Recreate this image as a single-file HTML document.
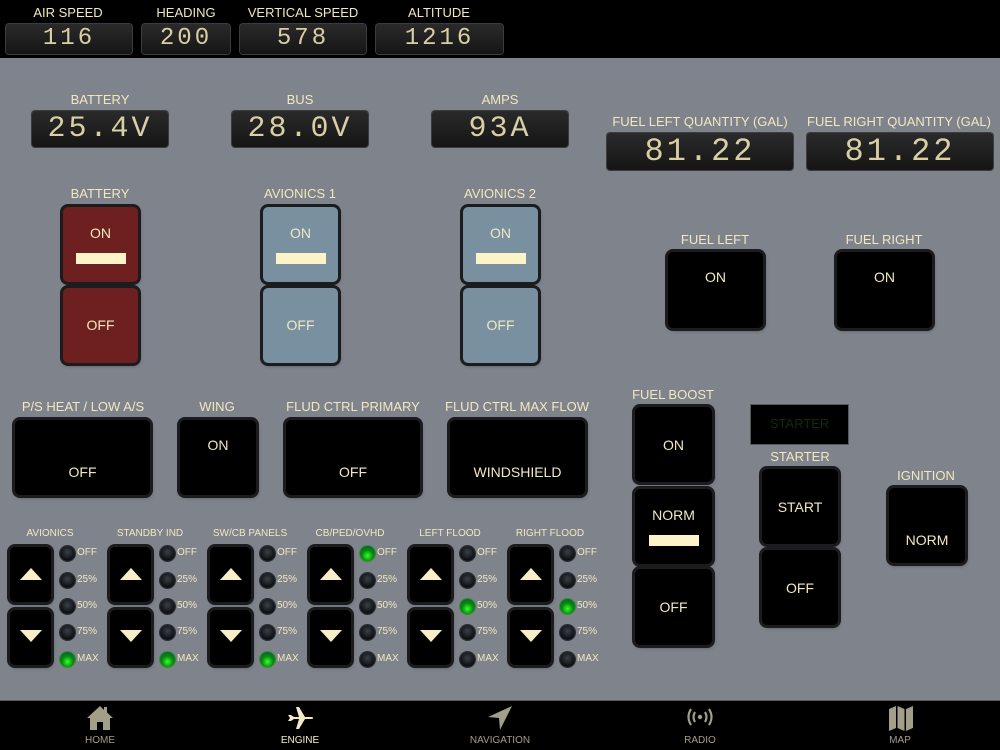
<!DOCTYPE html>
<html><head><meta charset="utf-8"><style>
*{margin:0;padding:0;box-sizing:border-box}
body{width:1000px;height:750px;overflow:hidden;background:#7e838c;font-family:"Liberation Sans",sans-serif;color:#f2e8bf;position:relative}
.a{position:absolute}
.top{left:0;top:0;width:1000px;height:58px;background:#000}
.bot{left:0;top:700px;width:1000px;height:50px;background:#000;border-top:1px solid #55585e}
.lbl{position:absolute;font-size:13px;text-align:center;white-space:nowrap;transform:translateX(-50%)}
.disp{position:absolute;background:linear-gradient(#2a2a2a,#151515);border-radius:3px;box-shadow:0 0 0 1px #3a3c40;color:#d9cfa5;font-family:"Liberation Mono",monospace;text-align:center;letter-spacing:3px}
.btn{position:absolute;background:#000;border-radius:5px;box-shadow:0 0 0 3px #1c1c1e,1px 2px 4px rgba(0,0,0,.5);font-size:14px;text-align:center}
.btn span{position:absolute;left:0;right:0}
.red{background:#6d201f}
.blue{background:#7890a0}
.bar{position:absolute;left:50%;width:50px;height:11px;margin-left:-25px;background:#fdf3c8}
.led{position:absolute;width:15px;height:15px;border-radius:50%;background:radial-gradient(circle at 50% 40%,#3a4048,#0b0d10 70%);box-shadow:0 0 0 1px #2a2d33}
.led.g{background:radial-gradient(circle at 50% 65%,#3f3 ,#0a8a0a 45%,#063 80%);box-shadow:0 0 0 1px #3a8a3a}
.lt{position:absolute;font-size:10px}
.tri-u{position:absolute;left:50%;margin-left:-11px;width:0;height:0;border-left:11px solid transparent;border-right:11px solid transparent;border-bottom:12px solid #f8efc8}
.tri-d{position:absolute;left:50%;margin-left:-11px;width:0;height:0;border-left:11px solid transparent;border-right:11px solid transparent;border-top:12px solid #f8efc8}
.tab{position:absolute;top:735px;font-size:10px;color:#a39e88;transform:translateX(-50%)}
</style></head><body>
<div class="a top"></div>
<div class="lbl" style="left:68px;top:5px">AIR SPEED</div>
<div class="lbl" style="left:186px;top:5px">HEADING</div>
<div class="lbl" style="left:303px;top:5px">VERTICAL SPEED</div>
<div class="lbl" style="left:439px;top:5px">ALTITUDE</div>
<div class="disp" style="left:6px;top:24px;width:126px;height:30px;font-size:24px;line-height:30px">116</div>
<div class="disp" style="left:142px;top:24px;width:88px;height:30px;font-size:24px;line-height:30px">200</div>
<div class="disp" style="left:240px;top:24px;width:126px;height:30px;font-size:24px;line-height:30px">578</div>
<div class="disp" style="left:376px;top:24px;width:127px;height:30px;font-size:24px;line-height:30px">1216</div>

<div class="lbl" style="left:100px;top:92px">BATTERY</div>
<div class="lbl" style="left:300px;top:92px">BUS</div>
<div class="lbl" style="left:500px;top:92px">AMPS</div>
<div class="disp" style="left:32px;top:111px;width:136px;height:36px;font-size:30px;line-height:36px">25.4V</div>
<div class="disp" style="left:232px;top:111px;width:136px;height:36px;font-size:30px;line-height:36px">28.0V</div>
<div class="disp" style="left:432px;top:111px;width:136px;height:36px;font-size:30px;line-height:36px">93A</div>
<div class="lbl" style="left:700px;top:114px">FUEL LEFT QUANTITY (GAL)</div>
<div class="lbl" style="left:899px;top:114px">FUEL RIGHT QUANTITY (GAL)</div>
<div class="disp" style="left:607px;top:133px;width:186px;height:37px;font-size:32px;line-height:37px">81.22</div>
<div class="disp" style="left:807px;top:133px;width:186px;height:37px;font-size:32px;line-height:37px">81.22</div>

<div class="lbl" style="left:100px;top:186px">BATTERY</div>
<div class="lbl" style="left:300px;top:186px">AVIONICS 1</div>
<div class="lbl" style="left:500px;top:186px">AVIONICS 2</div>
<div class="btn red" style="left:63px;top:207px;width:75px;height:75px"><span style="top:18px">ON</span><div class="bar" style="top:46px"></div></div>
<div class="btn red" style="left:63px;top:288px;width:75px;height:75px"><span style="top:29px">OFF</span></div>
<div class="btn blue" style="left:263px;top:207px;width:75px;height:75px"><span style="top:18px">ON</span><div class="bar" style="top:46px"></div></div>
<div class="btn blue" style="left:263px;top:288px;width:75px;height:75px"><span style="top:29px">OFF</span></div>
<div class="btn blue" style="left:463px;top:207px;width:75px;height:75px"><span style="top:18px">ON</span><div class="bar" style="top:46px"></div></div>
<div class="btn blue" style="left:463px;top:288px;width:75px;height:75px"><span style="top:29px">OFF</span></div>

<div class="lbl" style="left:715px;top:232px">FUEL LEFT</div>
<div class="lbl" style="left:884px;top:232px">FUEL RIGHT</div>
<div class="btn" style="left:668px;top:252px;width:95px;height:76px"><span style="top:17px">ON</span></div>
<div class="btn" style="left:837px;top:252px;width:95px;height:76px"><span style="top:17px">ON</span></div>

<div class="lbl" style="left:83px;top:399px">P/S HEAT / LOW A/S</div>
<div class="lbl" style="left:217px;top:399px">WING</div>
<div class="lbl" style="left:353px;top:399px">FLUD CTRL PRIMARY</div>
<div class="lbl" style="left:517px;top:399px">FLUD CTRL MAX FLOW</div>
<div class="btn" style="left:15px;top:420px;width:135px;height:75px"><span style="top:44px">OFF</span></div>
<div class="btn" style="left:180px;top:420px;width:76px;height:75px"><span style="top:17px">ON</span></div>
<div class="btn" style="left:286px;top:420px;width:134px;height:75px"><span style="top:44px">OFF</span></div>
<div class="btn" style="left:450px;top:420px;width:135px;height:75px"><span style="top:44px">WINDSHIELD</span></div>

<div class="lbl" style="left:673px;top:387px">FUEL BOOST</div>
<div class="btn" style="left:635px;top:407px;width:77px;height:75px"><span style="top:30px">ON</span></div>
<div class="btn" style="left:635px;top:489px;width:77px;height:75px"><span style="top:18px">NORM</span><div class="bar" style="top:46px"></div></div>
<div class="btn" style="left:635px;top:569px;width:77px;height:76px"><span style="top:30px">OFF</span></div>
<div class="a" style="left:751px;top:405px;width:97px;height:39px;background:#000;box-shadow:0 0 0 1px #55585e;color:#0f2a10;font-size:13px;text-align:center;line-height:37px">STARTER</div>
<div class="lbl" style="left:800px;top:449px">STARTER</div>
<div class="btn" style="left:762px;top:469px;width:76px;height:75px"><span style="top:30px">START</span></div>
<div class="btn" style="left:762px;top:550px;width:76px;height:75px"><span style="top:30px">OFF</span></div>
<div class="lbl" style="left:926px;top:468px">IGNITION</div>
<div class="btn" style="left:889px;top:488px;width:76px;height:75px"><span style="top:44px">NORM</span></div>

<div class="lbl" style="left:50px;top:528px;font-size:10px">AVIONICS</div>
<div class="lbl" style="left:150px;top:528px;font-size:10px">STANDBY IND</div>
<div class="lbl" style="left:250px;top:528px;font-size:10px">SW/CB PANELS</div>
<div class="lbl" style="left:350px;top:528px;font-size:10px">CB/PED/OVHD</div>
<div class="lbl" style="left:450px;top:528px;font-size:10px">LEFT FLOOD</div>
<div class="lbl" style="left:550px;top:528px;font-size:10px">RIGHT FLOOD</div>

<div class="btn" style="left:10px;top:547px;width:41px;height:55px"><div class="tri-u" style="top:21px"></div></div>
<div class="btn" style="left:10px;top:610px;width:41px;height:55px"><div class="tri-d" style="top:20px"></div></div>
<div class="btn" style="left:110px;top:547px;width:41px;height:55px"><div class="tri-u" style="top:21px"></div></div>
<div class="btn" style="left:110px;top:610px;width:41px;height:55px"><div class="tri-d" style="top:20px"></div></div>
<div class="btn" style="left:210px;top:547px;width:41px;height:55px"><div class="tri-u" style="top:21px"></div></div>
<div class="btn" style="left:210px;top:610px;width:41px;height:55px"><div class="tri-d" style="top:20px"></div></div>
<div class="btn" style="left:310px;top:547px;width:41px;height:55px"><div class="tri-u" style="top:21px"></div></div>
<div class="btn" style="left:310px;top:610px;width:41px;height:55px"><div class="tri-d" style="top:20px"></div></div>
<div class="btn" style="left:410px;top:547px;width:41px;height:55px"><div class="tri-u" style="top:21px"></div></div>
<div class="btn" style="left:410px;top:610px;width:41px;height:55px"><div class="tri-d" style="top:20px"></div></div>
<div class="btn" style="left:510px;top:547px;width:41px;height:55px"><div class="tri-u" style="top:21px"></div></div>
<div class="btn" style="left:510px;top:610px;width:41px;height:55px"><div class="tri-d" style="top:20px"></div></div>

<div class="led" style="left:60px;top:546px"></div><div class="led" style="left:60px;top:573px"></div><div class="led" style="left:60px;top:599px"></div><div class="led" style="left:60px;top:625px"></div><div class="led g" style="left:60px;top:652px"></div>
<div class="led" style="left:160px;top:546px"></div><div class="led" style="left:160px;top:573px"></div><div class="led" style="left:160px;top:599px"></div><div class="led" style="left:160px;top:625px"></div><div class="led g" style="left:160px;top:652px"></div>
<div class="led" style="left:260px;top:546px"></div><div class="led" style="left:260px;top:573px"></div><div class="led" style="left:260px;top:599px"></div><div class="led" style="left:260px;top:625px"></div><div class="led g" style="left:260px;top:652px"></div>
<div class="led g" style="left:360px;top:546px"></div><div class="led" style="left:360px;top:573px"></div><div class="led" style="left:360px;top:599px"></div><div class="led" style="left:360px;top:625px"></div><div class="led" style="left:360px;top:652px"></div>
<div class="led" style="left:460px;top:546px"></div><div class="led" style="left:460px;top:573px"></div><div class="led g" style="left:460px;top:599px"></div><div class="led" style="left:460px;top:625px"></div><div class="led" style="left:460px;top:652px"></div>
<div class="led" style="left:560px;top:546px"></div><div class="led" style="left:560px;top:573px"></div><div class="led g" style="left:560px;top:599px"></div><div class="led" style="left:560px;top:625px"></div><div class="led" style="left:560px;top:652px"></div>

<div class="lt" style="left:77px;top:547px">OFF</div><div class="lt" style="left:77px;top:574px">25%</div><div class="lt" style="left:77px;top:600px">50%</div><div class="lt" style="left:77px;top:626px">75%</div><div class="lt" style="left:77px;top:653px">MAX</div>
<div class="lt" style="left:177px;top:547px">OFF</div><div class="lt" style="left:177px;top:574px">25%</div><div class="lt" style="left:177px;top:600px">50%</div><div class="lt" style="left:177px;top:626px">75%</div><div class="lt" style="left:177px;top:653px">MAX</div>
<div class="lt" style="left:277px;top:547px">OFF</div><div class="lt" style="left:277px;top:574px">25%</div><div class="lt" style="left:277px;top:600px">50%</div><div class="lt" style="left:277px;top:626px">75%</div><div class="lt" style="left:277px;top:653px">MAX</div>
<div class="lt" style="left:377px;top:547px">OFF</div><div class="lt" style="left:377px;top:574px">25%</div><div class="lt" style="left:377px;top:600px">50%</div><div class="lt" style="left:377px;top:626px">75%</div><div class="lt" style="left:377px;top:653px">MAX</div>
<div class="lt" style="left:477px;top:547px">OFF</div><div class="lt" style="left:477px;top:574px">25%</div><div class="lt" style="left:477px;top:600px">50%</div><div class="lt" style="left:477px;top:626px">75%</div><div class="lt" style="left:477px;top:653px">MAX</div>
<div class="lt" style="left:577px;top:547px">OFF</div><div class="lt" style="left:577px;top:574px">25%</div><div class="lt" style="left:577px;top:600px">50%</div><div class="lt" style="left:577px;top:626px">75%</div><div class="lt" style="left:577px;top:653px">MAX</div>

<div class="a bot"></div>
<svg class="a" style="left:86px;top:704px" width="28" height="28" viewBox="0 0 28 28"><path d="M14 2 L1 14 L4 14 L4 26 L11 26 L11 18 L17 18 L17 26 L24 26 L24 14 L27 14 L21 8.5 L21 3 L18 3 L18 6 Z" fill="#a39e88"/></svg>
<svg class="a" style="left:286px;top:706px" width="28" height="24" viewBox="0 0 28 24"><path d="M2 9 L5 9 L8 11 L13 11 L10 1 L13 1 L19 11 L25 11 C28 11 28 13 25 13 L19 13 L13 23 L10 23 L13 13 L8 13 L5 15 L2 15 L4 12 Z" fill="#f4ebc6"/></svg>
<svg class="a" style="left:487px;top:705px" width="26" height="26" viewBox="0 0 26 26"><path d="M25 1 L1 12 L12 13 L13 25 Z" fill="#a39e88"/></svg>
<svg class="a" style="left:684px;top:706px" width="32" height="22" viewBox="0 0 32 22" fill="none" stroke="#a39e88" stroke-width="2.2"><circle cx="16" cy="11" r="2.2" fill="#a39e88" stroke="none"/><path d="M11 6 Q8 11 11 16 M21 6 Q24 11 21 16 M7 3 Q2 11 7 19 M25 3 Q30 11 25 19"/></svg>
<svg class="a" style="left:887px;top:704px" width="28" height="28" viewBox="0 0 28 28"><path d="M2 5 L9 2 L9 24 L2 27 Z M10.5 2 L17.5 5 L17.5 27 L10.5 24 Z M19 5 L26 2 L26 24 L19 27 Z" fill="#a39e88"/></svg>
<div class="tab" style="left:100px">HOME</div>
<div class="tab" style="left:300px;color:#f4ebc6">ENGINE</div>
<div class="tab" style="left:500px">NAVIGATION</div>
<div class="tab" style="left:700px">RADIO</div>
<div class="tab" style="left:900px">MAP</div>
</body></html>
